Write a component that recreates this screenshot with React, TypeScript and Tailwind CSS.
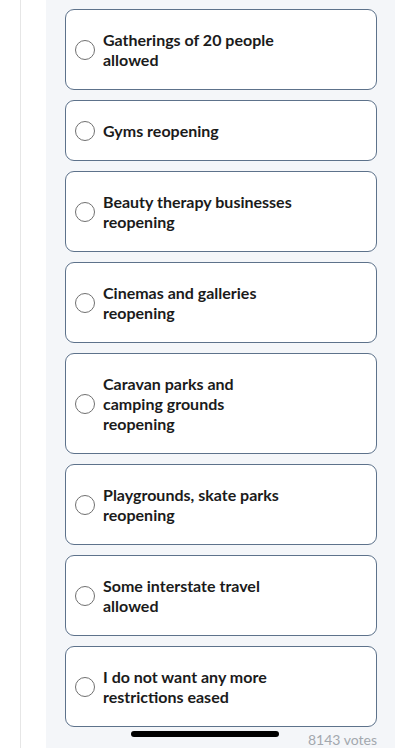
const options = [
  'Gatherings of 20 people allowed',
  'Gyms reopening',
  'Beauty therapy businesses reopening',
  'Cinemas and galleries reopening',
  'Caravan parks and camping grounds reopening',
  'Playgrounds, skate parks reopening',
  'Some interstate travel allowed',
  'I do not want any more restrictions eased',
];

function Option({ label }: { label: string }) {
  return (
    <label className="flex items-center rounded-[9px] border border-[#5d728b] bg-white pb-[19px] pl-[9px] pr-3 pt-5">
      <span className="h-5 w-5 shrink-0 rounded-full border border-[#707070] bg-white" />
      <span className="ml-2 w-[192px] text-[16px] font-bold leading-5 text-[#1b1b1b]">{label}</span>
    </label>
  );
}

export default function App() {
  return (
    <div className="relative flex h-[748px] w-[415px] overflow-hidden bg-white font-['Lato',sans-serif]">
      <div className="w-[21px] shrink-0 border-r border-[#e6e6e6]" />
      <div className="ml-[25px] w-[349px] shrink-0 bg-[#f4f6f9] pl-[19px] pr-[18px] pt-[9px]">
        <div className="flex flex-col gap-[10px]">
          {options.map((o) => (
            <Option key={o} label={o} />
          ))}
        </div>
        <div className="mt-[3px] text-right text-[14px] leading-5 text-[#a3a8ae]">8143 votes</div>
      </div>
      <div className="absolute left-[131px] top-[731px] h-[6px] w-[148px] rounded-full bg-black" />
    </div>
  );
}
